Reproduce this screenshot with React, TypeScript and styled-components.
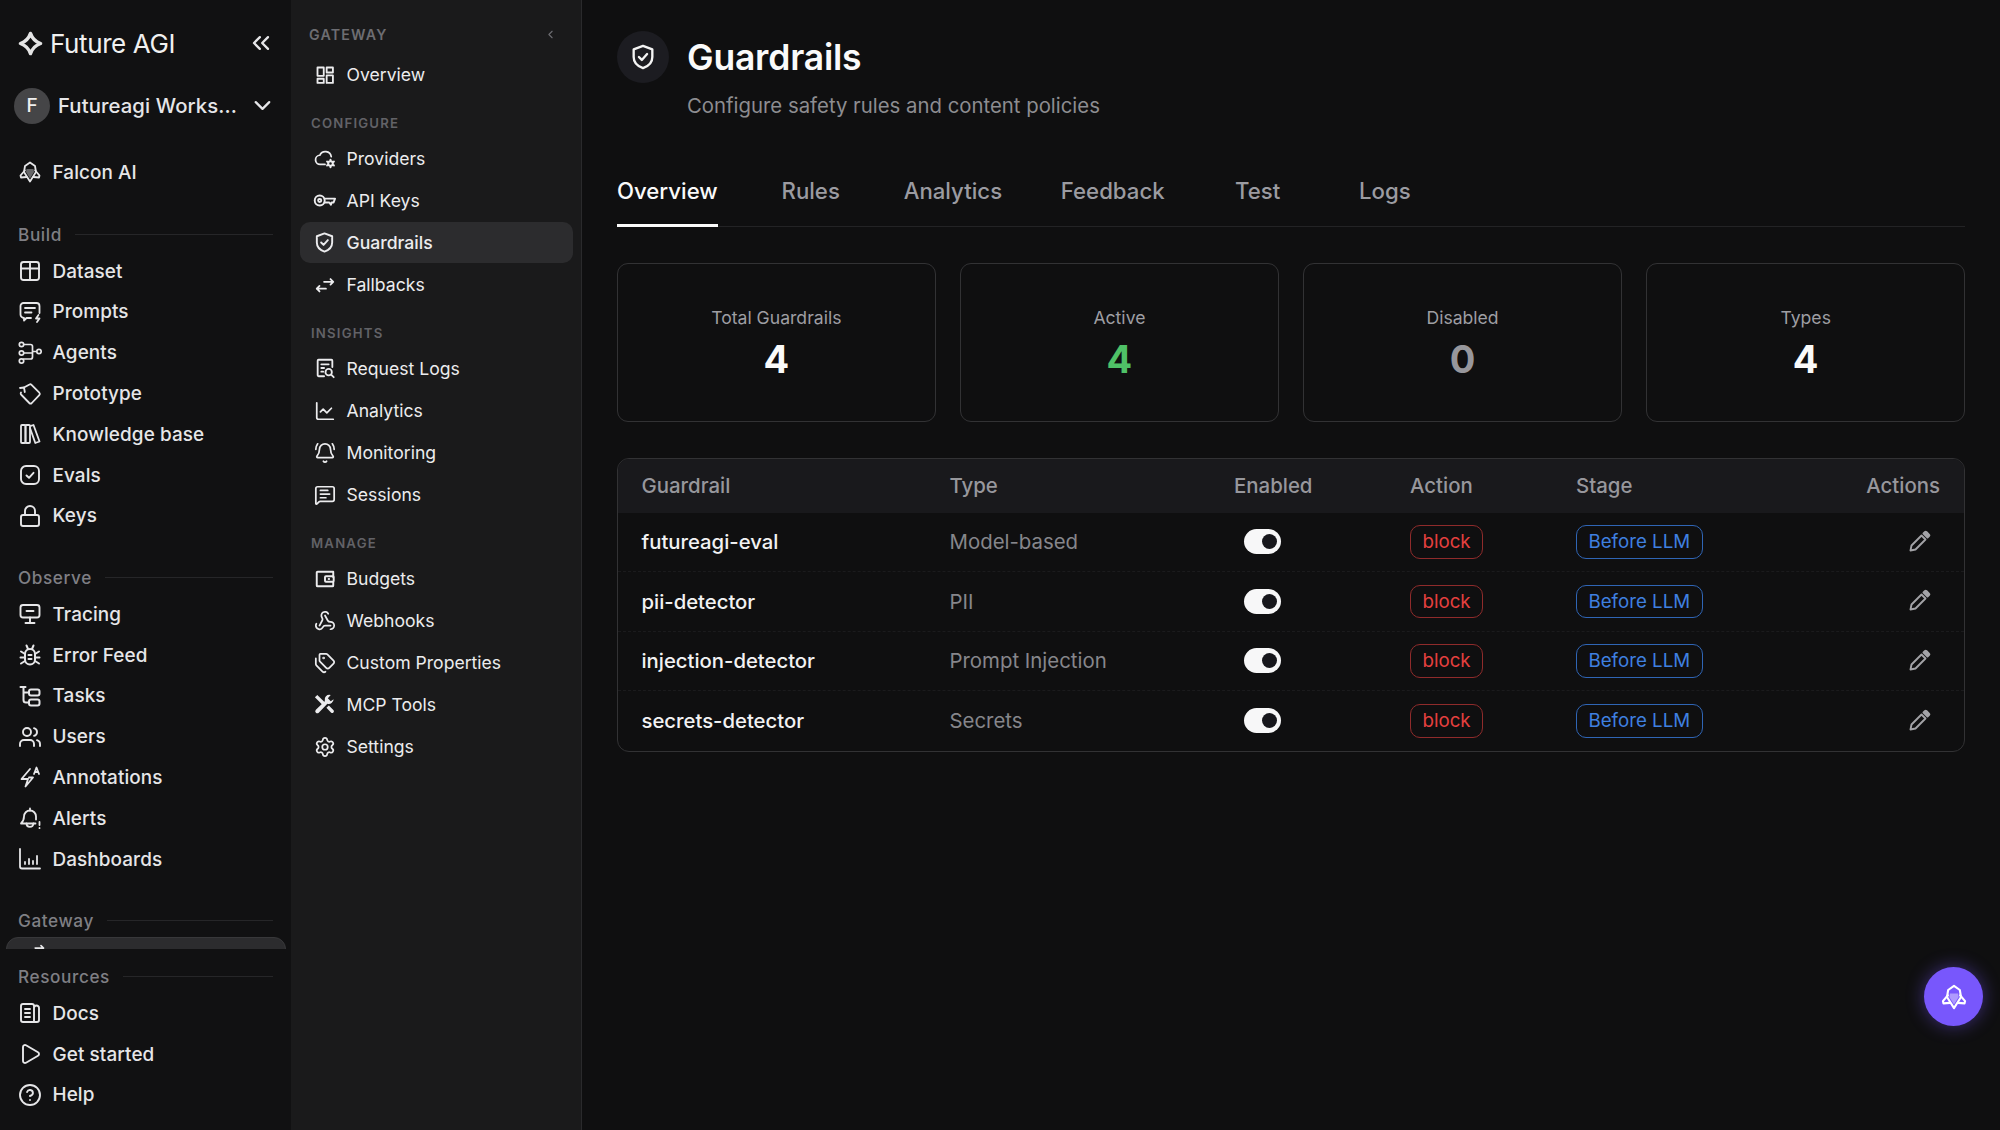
import * as React from 'react';
import styled, {createGlobalStyle} from 'styled-components';
import {
  BellRing, ChartLine, ChevronDown, ChevronLeft, ChevronsLeft, CircleHelp, Lock,
  MessageSquareText, Play, Settings, Tags, Users, Webhook,
} from 'lucide-react';

const GlobalStyle = createGlobalStyle`
  html, body {
    margin: 0;
    height: 100%;
    background: #0f0f10;
    font-family: Inter, "Liberation Sans", sans-serif;
    overflow: hidden;
  }
  * { box-sizing: border-box; }
`;

const Page = styled.div`
  display: flex;
  height: 1130px;
  width: 2000px;
`;

// left rail
const Rail = styled.aside`
  width: 291px;
  flex: none;
  display: flex;
  flex-direction: column;
  background: #111112;
  color: #e6e6e8;
`;
const RailScroll = styled.div`
  flex: 1;
  min-height: 0;
  overflow: hidden;
  padding-top: 23px;
`;
const RailBottom = styled.div`
  flex: none;
  height: 181px;
  padding-top: 17px;
  background: #111112;
`;
const LogoRow = styled.div`
  height: 40px;
  display: flex;
  align-items: center;
  padding: 0 16px 0 17px;
  justify-content: space-between;
`;
const Brand = styled.div`
  display: flex;
  align-items: center;
  gap: 6px;
  font-size: 26px;
  letter-spacing: -0.4px;
  color: #f0f0f0;
`;
const Workspace = styled.div`
  height: 41px;
  margin-top: 22px;
  display: flex;
  align-items: center;
  padding: 0 15px 0 14px;
`;
const Avatar = styled.div`
  width: 36px;
  height: 36px;
  border-radius: 50%;
  background: #454547;
  color: #f0f0f0;
  font-size: 19px;
  font-weight: 500;
  display: flex;
  align-items: center;
  justify-content: center;
  margin-right: 8px;
`;
const WorkspaceName = styled.div`
  flex: 1;
  font-size: 20.3px;
  font-weight: 500;
  letter-spacing: 0.1px;
  white-space: nowrap;
`;
const RailRow = styled.div<{$first?: boolean}>`
  height: 40.8px;
  display: flex;
  align-items: center;
  padding-left: 19px;
  gap: 11.5px;
  font-size: 18.9px;
  font-weight: 500;
  letter-spacing: 0.1px;
  color: #e6e6e8;
  ${p => p.$first && 'margin-top: 26px;'}
`;
const RailIcon = styled.span`
  width: 22px;
  height: 22px;
  flex: none;
  display: flex;
  align-items: center;
  justify-content: center;
  color: #e6e6e8;
  svg { flex: none; }
`;
const RailHeading = styled.div<{$top: number; $gap?: number}>`
  height: 20px;
  margin: ${p => p.$top}px 18px ${p => p.$gap ?? 6}px;
  display: flex;
  align-items: center;
  gap: 13px;
  font-size: 17.2px;
  font-weight: 500;
  letter-spacing: 0.6px;
  color: #7f7f84;
  &::after {
    content: '';
    flex: 1;
    height: 1px;
    background: #262628;
  }
`;
const ClippedPill = styled.div`
  height: 40px;
  margin: 6px 5px 0 6px;
  border-radius: 12px 12px 0 0;
  background: #2c2c2e;
  border: 1px solid #38383a;
  padding: 3px 0 0 19px;
  color: #e6e6e8;
`;

// gateway menu
const Menu = styled.nav`
  width: 291px;
  flex: none;
  background: #1a1a1b;
  border-right: 1px solid #2a2a2c;
  padding-top: 24px;
`;
const MenuTop = styled.div`
  height: 20px;
  display: flex;
  align-items: center;
  justify-content: space-between;
  padding: 0 24px 0 18px;
  margin-bottom: 10.4px;
  font-size: 14.2px;
  font-weight: 600;
  letter-spacing: 1.2px;
  color: #6d6d72;
`;
const MenuLabel = styled.div`
  height: 20px;
  margin: 18.2px 0 5.1px 20px;
  display: flex;
  align-items: center;
  font-size: 13.2px;
  font-weight: 600;
  letter-spacing: 1.2px;
  color: #626267;
`;
const MenuRow = styled.div<{$active?: boolean}>`
  height: 40.5px;
  margin: 0 8px 1.6px 9px;
  padding-left: 14.5px;
  border-radius: 10px;
  display: flex;
  align-items: center;
  gap: 12px;
  font-size: 17.6px;
  font-weight: ${p => (p.$active ? 500 : 400)};
  color: #ececee;
  background: ${p => (p.$active ? '#2c2c2e' : 'transparent')};
`;
const MenuIcon = styled.span`
  width: 20px;
  height: 20px;
  flex: none;
  display: flex;
  align-items: center;
  justify-content: center;
  svg { flex: none; }
`;

// main
const Main = styled.main`
  flex: 1;
  min-width: 0;
  padding: 31px 35px 0 35px;
  background: #0f0f10;
`;
const TitleRow = styled.div`
  display: flex;
  align-items: center;
  gap: 18px;
`;
const TitleBadge = styled.div`
  width: 52px;
  height: 52px;
  border-radius: 50%;
  background: #1c1c21;
  display: flex;
  align-items: center;
  justify-content: center;
  color: #f4f4f4;
`;
const Title = styled.h1`
  margin: 0;
  height: 52px;
  font-size: 35.5px;
  line-height: 54px;
  font-weight: 600;
  color: #fafafa;
  letter-spacing: -0.2px;
`;
const Subtitle = styled.p`
  margin: 9px 0 0 70px;
  font-size: 20.35px;
  line-height: 28px;
  color: #8d8d91;
`;
const TabBar = styled.div`
  margin-top: 34px;
  display: flex;
  gap: 58.7px;
  height: 73px;
  border-bottom: 1px solid #232325;
`;
const Tab = styled.div<{$active?: boolean}>`
  min-width: 68.6px;
  height: 73px;
  display: flex;
  align-items: center;
  justify-content: center;
  font-size: 22.2px;
  font-weight: 500;
  color: ${p => (p.$active ? '#fafafa' : '#9b9ba1')};
  border-bottom: 3px solid ${p => (p.$active ? '#fafafa' : 'transparent')};
  padding-top: 2px;
`;
const Cards = styled.div`
  margin-top: 36px;
  display: grid;
  grid-template-columns: repeat(4, 1fr);
  gap: 24.5px;
`;
const Card = styled.div`
  height: 159px;
  padding-top: 2px;
  border: 1px solid #323234;
  border-radius: 11px;
  display: flex;
  flex-direction: column;
  align-items: center;
  justify-content: center;
`;
const CardLabel = styled.div`
  font-size: 17.6px;
  line-height: 24px;
  color: #9e9ea3;
`;
const CardValue = styled.div<{$tone: string}>`
  margin-top: 6px;
  font-size: 38px;
  line-height: 46px;
  font-weight: 700;
  color: ${p => p.$tone};
`;
const Table = styled.div`
  margin-top: 35.5px;
  border: 1px solid #323234;
  border-radius: 12px;
  overflow: hidden;
`;
const TableRow = styled.div<{$head?: boolean; $last?: boolean}>`
  display: grid;
  grid-template-columns: 308px 284.5px 176px 166px 1fr auto;
  align-items: center;
  height: ${p => (p.$head ? '54px' : '59.5px')};
  padding: 0 24px 0 23.5px;
  padding-bottom: ${p => (p.$head ? '1px' : '0')};
  background: ${p => (p.$head ? '#19191c' : 'transparent')};
  border-bottom: ${p => (p.$head || p.$last ? 'none' : '1px dashed #1b1b1d')};
`;
const HeadCell = styled.div`
  font-size: 20.4px;
  font-weight: 500;
  color: #97979c;
`;
const NameCell = styled.div`
  font-size: 20.3px;
  font-weight: 500;
  color: #f2f2f3;
`;
const TypeCell = styled.div`
  font-size: 20.4px;
  color: #86868b;
`;
const Toggle = styled.div`
  width: 37px;
  height: 25px;
  margin-left: 9.5px;
  border-radius: 13px;
  background: #f7f7f8;
  position: relative;
  &::after {
    content: '';
    position: absolute;
    right: 4px;
    top: 5px;
    width: 15px;
    height: 15px;
    border-radius: 50%;
    background: #17171c;
  }
`;
const Chip = styled.div<{$tone: string; $line: string}>`
  display: inline-flex;
  align-items: center;
  height: 33.5px;
  padding: 0 11.5px;
  border-radius: 10px;
  border: 1.4px solid ${p => p.$line};
  color: ${p => p.$tone};
  font-size: 18.7px;
  justify-self: start;
`;
const EditButton = styled.div`
  display: flex;
  justify-content: flex-end;
  color: #a2a2a6;
  padding-right: 9px;
`;
const Fab = styled.div`
  position: fixed;
  left: 1924px;
  top: 967px;
  width: 59px;
  height: 59px;
  border-radius: 50%;
  background: #7857fc;
  box-shadow: 0 0 18px rgba(120, 87, 252, 0.45);
  display: flex;
  align-items: center;
  justify-content: center;
  color: #fff;
`;

// hand drawn icons, all on a 24 box
type IconProps = {size?: number; sw?: number; children: React.ReactNode};
const Svg = ({size = 24, sw = 1.9, children}: IconProps) => (
  <svg width={size} height={size} viewBox="0 0 24 24" fill="none" stroke="currentColor" strokeWidth={sw} strokeLinecap="round" strokeLinejoin="round">
    {children}
  </svg>
);
const LogoIcon = () => (
  <svg width="27" height="27" viewBox="0 0 24 24" fill="none" stroke="#e4e4e4" strokeWidth="3" strokeLinejoin="round">
    <path d="M12 3c1.500 4.500 4.500 7.500 9 9-4.500 1.500-7.500 4.500-9 9-1.500-4.500-4.500-7.500-9-9 4.500-1.500 7.500-4.500 9-9Z" />
  </svg>
);
const FalconIcon = ({size = 24, core}: {size?: number; core: string}) => (
  <Svg size={size} sw={1.8}>
    <path d="M8.500 9h7l.5 3-4 6.500L8 12Z" fill={core} stroke="none" />
    <path d="M12 2.500 17 6l1 6-6 9.500L6 12l1-6Z" />
    <path d="M6.800 10.500 2.500 15.500l.5 2 5.500-.5M17.200 10.500l4.300 5-.5 2-5.500-.5" />
  </Svg>
);
const DatasetIcon = () => <Svg><rect x="3" y="3" width="18" height="18" rx="2.500" /><path d="M3 9.500h18M12 3v18" /></Svg>;
const PromptsIcon = () => <Svg sw={1.8}><path d="M13 18H8.500L6 20.500V18a3.500 3.500 0 0 1-3.500-3.500V6A3 3 0 0 1 5.500 3h13a3 3 0 0 1 3 3v7" /><path d="M7 8h10M7 12.500h6.500" /><path d="m20.500 15-2.500 3.500h3.500l-2.500 3.500" /></Svg>;
const AgentsIcon = () => <Svg sw={1.7}><circle cx="3.500" cy="3.500" r="2.200" /><circle cx="3.500" cy="12" r="2.200" /><circle cx="3.500" cy="20" r="2.200" /><circle cx="21" cy="10.500" r="2.200" /><path d="M6 3.500h6.500a2 2 0 0 1 2 2V16a2 2 0 0 1-2 2H5.500M6 12h8.500M14.500 10.500h4" /></Svg>;
const PrototypeIcon = () => <Svg sw={1.8}><path d="m6 5.500 5.500-3a1.500 1.500 0 0 1 1.800.2l8 8a1.800 1.800 0 0 1 0 2.500l-7.500 7.800a1.800 1.800 0 0 1-2.500 0L3.500 13a1.800 1.800 0 0 1-.5-2.500" /><path d="m2 6 4-.5.800 4.500" /></Svg>;
const BooksIcon = () => <Svg sw={1.8}><rect x="3" y="3" width="4.500" height="18" rx="1" /><rect x="7.500" y="3" width="4.500" height="18" rx="1" /><path d="M12.800 3.800 15.500 3l6 16.500-4.200 1.500L12 6" /></Svg>;
const CheckBoxIcon = () => <Svg><path d="M8 3h8a5 5 0 0 1 5 5v8a5 5 0 0 1-5 5H8a5 5 0 0 1-5-5V8a5 5 0 0 1 5-5Z" /><path d="m8.500 12.500 2.500 2.300 4.500-5" /></Svg>;
const TracingIcon = () => <Svg><rect x="2.500" y="3" width="19" height="12.500" rx="2.500" /><path d="M8.500 9h7M12 15.500V21M7.500 21h9" /></Svg>;
const BugIcon = () => <Svg sw={2}><path d="m8.500 2.500 1.500 3.500M15.500 2.500 14 6" /><rect x="7" y="6" width="10" height="15.500" rx="5" /><path d="M10.500 12h3M10.500 16h3" /><path d="m3 8.500 4 2.500M21 8.500 17 11M2.500 14.500H7M21.500 14.500H17M3 20.500 7 18M21 20.500 17 18" /></Svg>;
const TasksIcon = () => <Svg sw={2}><path d="M2.500 3h5M5.500 3v13a2.500 2.500 0 0 0 2.500 2.500h3M5.500 8.500H11" /><rect x="11" y="5.500" width="10.500" height="6" rx="2" /><rect x="11" y="15.500" width="10.500" height="6" rx="2" /></Svg>;
const AnnotationsIcon = () => <Svg sw={1.8}><path d="M12 4 3.500 14H10l-2.500 7.500 7.500-9H11" /><path d="m16 9 2.500-6.500L21 9M17 7h3" /></Svg>;
const AlertsIcon = () => <Svg sw={1.8}><path d="M17.500 17.500H3c1.500-1.500 3-3 3-7a6 6 0 0 1 6-6 6 6 0 0 1 6 6v3" /><path d="M12 2.500v2M8.500 17.500c0 4.500 6.500 4.500 7 0" /><path d="M21.500 16v3M21.500 22v.2" /></Svg>;
const DashboardsIcon = () => <Svg sw={1.8}><path d="M2 2v17.500A2 2 0 0 0 4 21.500h18" /><path d="M7 17v-2M11 17v-5M15 17v-3M19 17V9" /></Svg>;
const DocsIcon = () => <Svg><path d="M16 21V5a2 2 0 0 0-2-2H5a2 2 0 0 0-2 2v14a2 2 0 0 0 2 2h14a2 2 0 0 0 2-2V7a1.500 1.500 0 0 0-5 0" /><path d="M7 8h5M7 12h5M7 16h5" /></Svg>;
const OverviewIcon = () => <Svg size={20} sw={2.2}><rect x="3" y="3" width="7.500" height="10" /><rect x="14" y="3" width="7.500" height="6" /><rect x="14" y="12.500" width="7.500" height="9" /><rect x="3" y="16.500" width="7.500" height="5" /></Svg>;
const ProvidersIcon = () => (
  <Svg size={22} sw={1.9}>
    <path d="M12 19H7a5 5 0 0 1-.6-10A6.500 6.500 0 0 1 18.800 10.500" />
    <circle cx="18" cy="18" r="2.500" strokeWidth="2.200" />
    <path d="M18 13.800v1.200M18 21v1.200M14.300 15.900l1.100.6M20.600 19.500l1.100.6M14.300 20.100l1.100-.6M20.600 16.500l1.100-.6" strokeWidth="2.200" />
  </Svg>
);
const KeyIcon = () => <Svg size={23} sw={2}><circle cx="7" cy="12" r="5.200" /><circle cx="7" cy="12" r="1.600" /><path d="M12 10h11l-1.500 4h-2l-.8 2.500L17 14h-5" /></Svg>;
const ShieldIcon = ({size = 23}: {size?: number}) => <Svg size={size} sw={2}><path d="M12 2.500 20 5.500v6.500c0 5-3.500 8-8 9.500-4.500-1.500-8-4.500-8-9.500V5.500Z" /><path d="m8.500 12 2.500 2.500 4.500-5" /></Svg>;
const FallbackIcon = ({size = 22}: {size?: number}) => <Svg size={size} sw={2}><path d="M11 8.500h10M18 5.500l3 3-3 3M13 16H3M6 13l-3 3 3 3" /></Svg>;
const LogsIcon = () => <Svg size={22} sw={2}><path d="M11 21H5a1 1 0 0 1-1-1V4a1 1 0 0 1 1-1h14a1 1 0 0 1 1 1v7" /><path d="M8 8h8M8 12h3M8 16h2" /><circle cx="16" cy="16.500" r="3.500" /><path d="m19 19.500 2.500 2.500" /></Svg>;
const WalletIcon = () => <Svg size={22} sw={2.1}><path d="M21 4H4a1 1 0 0 0-1 1v14a1 1 0 0 0 1 1h16a1 1 0 0 0 1-1v-4M21 10V4" /><rect x="12" y="9" width="9.500" height="6" rx="1" /><path d="M16 12h.5" /></Svg>;
const ToolsIcon = () => (
  <svg width="23" height="23" viewBox="0 0 24 24" fill="currentColor">
    <path d="M2 4.500 4.500 2l8 8-2.500 2.500Z" />
    <path d="M21.500 6.500a5 5 0 0 1-6.500 4.700L6 20.500a2 2 0 0 1-3-3l9.300-9a5 5 0 0 1 6.200-6.300L15.500 5.500l3 3Z" />
    <path d="m14 15.500 2.500-2.500 5 5a1.800 1.800 0 0 1-2.500 2.500Z" />
  </svg>
);
const PencilIcon = () => (
  <Svg size={24} sw={1.9}>
    <path d="M3.500 20.500 4.500 15.500 14.500 5.500 18.500 9.500 8.500 19.500Z" />
    <path d="M16.500 3.500 18 2a1 1 0 0 1 1.400 0L22 4.600a1 1 0 0 1 0 1.400L20.500 7.500Z" fill="currentColor" />
  </Svg>
);

const lucide = {size: 24, strokeWidth: 1.9};
const small = {size: 22, strokeWidth: 1.9};

const buildItems: [string, JSX.Element][] = [
  ['Dataset', <DatasetIcon />],
  ['Prompts', <PromptsIcon />],
  ['Agents', <AgentsIcon />],
  ['Prototype', <PrototypeIcon />],
  ['Knowledge base', <BooksIcon />],
  ['Evals', <CheckBoxIcon />],
  ['Keys', <Lock {...lucide} />],
];
const observeItems: [string, JSX.Element][] = [
  ['Tracing', <TracingIcon />],
  ['Error Feed', <BugIcon />],
  ['Tasks', <TasksIcon />],
  ['Users', <Users {...lucide} />],
  ['Annotations', <AnnotationsIcon />],
  ['Alerts', <AlertsIcon />],
  ['Dashboards', <DashboardsIcon />],
];
const resourceItems: [string, JSX.Element][] = [
  ['Docs', <DocsIcon />],
  ['Get started', <Play {...lucide} />],
  ['Help', <CircleHelp {...lucide} />],
];
const menuGroups: {label: string; items: [string, JSX.Element][]}[] = [
  {label: 'CONFIGURE', items: [
    ['Providers', <ProvidersIcon />],
    ['API Keys', <KeyIcon />],
    ['Guardrails', <ShieldIcon />],
    ['Fallbacks', <FallbackIcon />],
  ]},
  {label: 'INSIGHTS', items: [
    ['Request Logs', <LogsIcon />],
    ['Analytics', <ChartLine {...small} />],
    ['Monitoring', <BellRing {...small} />],
    ['Sessions', <MessageSquareText {...small} />],
  ]},
  {label: 'MANAGE', items: [
    ['Budgets', <WalletIcon />],
    ['Webhooks', <Webhook {...small} />],
    ['Custom Properties', <Tags {...small} />],
    ['MCP Tools', <ToolsIcon />],
    ['Settings', <Settings {...small} />],
  ]},
];
const stats = [
  {label: 'Total Guardrails', value: '4', tone: '#fafafa'},
  {label: 'Active', value: '4', tone: '#4fc167'},
  {label: 'Disabled', value: '0', tone: '#97979c'},
  {label: 'Types', value: '4', tone: '#fafafa'},
];
const guardrails = [
  ['futureagi-eval', 'Model-based'],
  ['pii-detector', 'PII'],
  ['injection-detector', 'Prompt Injection'],
  ['secrets-detector', 'Secrets'],
];
const tabs = ['Overview', 'Rules', 'Analytics', 'Feedback', 'Test', 'Logs'];

const railRows = (items: [string, JSX.Element][]) => items.map(([name, icon]) => (
  <RailRow key={name}><RailIcon>{icon}</RailIcon>{name}</RailRow>
));

const App = () => (
  <Page>
    <GlobalStyle />
    <Rail>
      <RailScroll>
        <LogoRow>
          <Brand><LogoIcon />Future AGI</Brand>
          <ChevronsLeft size={28} strokeWidth={2} color="#e6e6e8" />
        </LogoRow>
        <Workspace>
          <Avatar>F</Avatar>
          <WorkspaceName>Futureagi Works...</WorkspaceName>
          <ChevronDown size={27} strokeWidth={2} color="#e6e6e8" />
        </Workspace>
        <RailRow $first><RailIcon><FalconIcon core="#666668" /></RailIcon>Falcon AI</RailRow>
        <RailHeading $top={32}>Build</RailHeading>
        {railRows(buildItems)}
        <RailHeading $top={31.5}>Observe</RailHeading>
        {railRows(observeItems)}
        <RailHeading $top={31.5}>Gateway</RailHeading>
        <ClippedPill><FallbackIcon size={20} /></ClippedPill>
      </RailScroll>
      <RailBottom>
        <RailHeading $top={0} $gap={7}>Resources</RailHeading>
        {railRows(resourceItems)}
      </RailBottom>
    </Rail>

    <Menu>
      <MenuTop>GATEWAY<ChevronLeft size={13} strokeWidth={2} /></MenuTop>
      <MenuRow><MenuIcon><OverviewIcon /></MenuIcon>Overview</MenuRow>
      {menuGroups.map(group => (
        <React.Fragment key={group.label}>
          <MenuLabel>{group.label}</MenuLabel>
          {group.items.map(([name, icon]) => (
            <MenuRow key={name} $active={name === 'Guardrails'}><MenuIcon>{icon}</MenuIcon>{name}</MenuRow>
          ))}
        </React.Fragment>
      ))}
    </Menu>

    <Main>
      <TitleRow>
        <TitleBadge><ShieldIcon size={28} /></TitleBadge>
        <Title>Guardrails</Title>
      </TitleRow>
      <Subtitle>Configure safety rules and content policies</Subtitle>
      <TabBar>
        {tabs.map((t, i) => <Tab key={t} $active={i === 0}>{t}</Tab>)}
      </TabBar>
      <Cards>
        {stats.map(s => (
          <Card key={s.label}>
            <CardLabel>{s.label}</CardLabel>
            <CardValue $tone={s.tone}>{s.value}</CardValue>
          </Card>
        ))}
      </Cards>
      <Table>
        <TableRow $head>
          <HeadCell>Guardrail</HeadCell>
          <HeadCell>Type</HeadCell>
          <HeadCell>Enabled</HeadCell>
          <HeadCell>Action</HeadCell>
          <HeadCell>Stage</HeadCell>
          <HeadCell>Actions</HeadCell>
        </TableRow>
        {guardrails.map(([name, type], i) => (
          <TableRow key={name} $last={i === guardrails.length - 1}>
            <NameCell>{name}</NameCell>
            <TypeCell>{type}</TypeCell>
            <Toggle />
            <Chip $tone="#e5403f" $line="#8f2b2b">block</Chip>
            <Chip $tone="#3f80e0" $line="#2f65b5">Before LLM</Chip>
            <EditButton><PencilIcon /></EditButton>
          </TableRow>
        ))}
      </Table>
    </Main>
    <Fab><FalconIcon size={28} core="rgba(255,255,255,0.4)" /></Fab>
  </Page>
);

export default App;
